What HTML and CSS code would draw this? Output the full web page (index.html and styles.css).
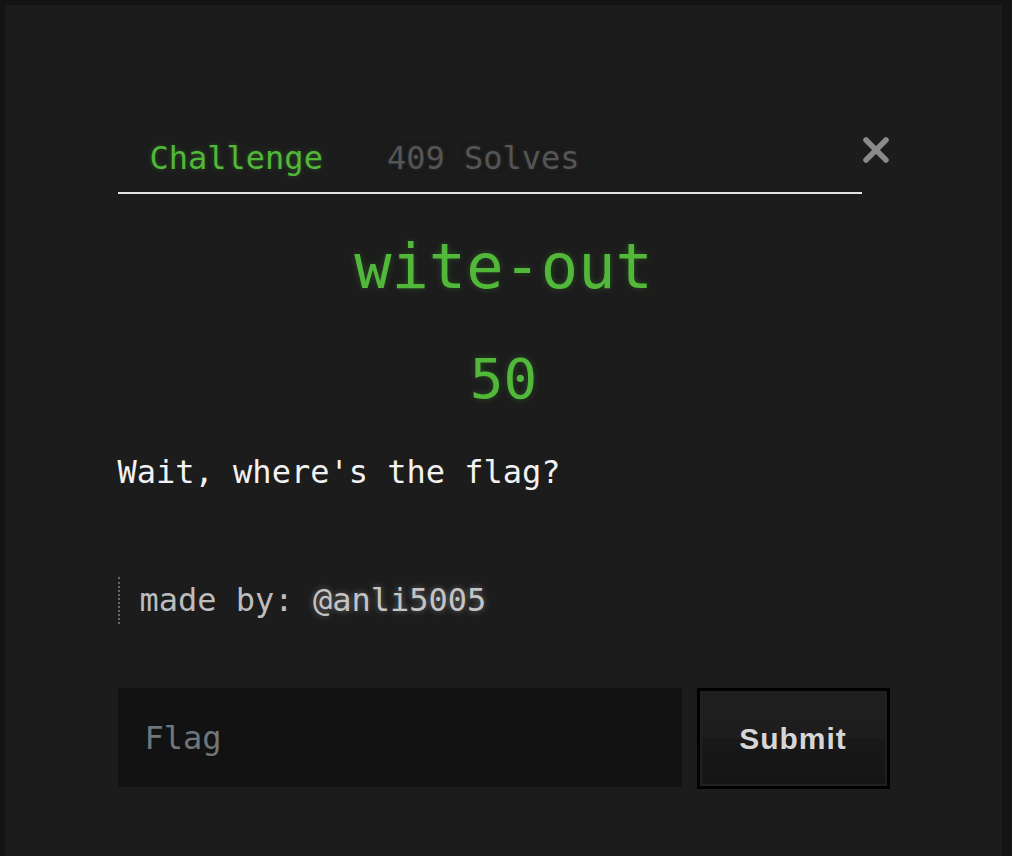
FILE: index.html
```html
<!DOCTYPE html>
<html lang="en">
<head>
    <meta charset="UTF-8">
    <meta name="viewport" content="width=device-width, initial-scale=1.0">
    <title>wite-out</title>
    <link rel="stylesheet" href="styles.css">
</head>
<body>
    <div class="modal">
        <div class="modal-body">
            <div class="tab-head">
                <nav class="tabs">
                    <a class="tab active" href="#">Challenge</a>
                    <a class="tab" href="#">409 Solves</a>
                </nav>
                <button class="close" type="button" aria-label="Close">
                    <svg width="28" height="28" viewBox="0 0 28 28">
                        <path d="M4 4 L24 24 M24 4 L4 24" stroke="#8a8a8a" stroke-width="5.5" stroke-linecap="round"/>
                    </svg>
                </button>
            </div>

            <h2 class="chal-name">wite-out</h2>
            <h3 class="chal-value">50</h3>

            <p class="chal-desc">Wait, where's the flag?</p>

            <blockquote class="author">made by: <span class="handle">@anli5005</span></blockquote>

            <form class="flag-form">
                <input type="text" class="flag-input" placeholder="Flag">
                <button type="submit" class="submit-btn">Submit</button>
            </form>
        </div>
    </div>
</body>
</html>
```

FILE: styles.css
```css
* {
    margin: 0;
    padding: 0;
    box-sizing: border-box;
}

body {
    background: #141414;
    min-height: 100vh;
    font-family: 'DejaVu Sans Mono', 'Liberation Mono', monospace;
    color: #eeeeee;
}

.modal {
    background: #1c1c1c;
    margin: 5px 10px 0 5px;
    min-height: 851px;
}

.modal-body {
    width: 772px;
    margin: 0 auto;
    padding-top: 126px;
}

/* tabs */
.tab-head {
    display: flex;
    align-items: flex-start;
}

.tabs {
    flex: 1;
    display: flex;
    border-bottom: 2px solid #e4e4e4;
}

.tab {
    font-size: 32px;
    line-height: 1.2;
    padding: 8px 32px 15px;
    text-decoration: none;
    color: #555555;
    text-shadow: 0 0 6px rgba(0, 0, 0, 0.9), 0 0 4px rgba(130, 130, 130, 0.45);
}

.tab.active {
    color: #52b83a;
    text-shadow: 0 0 5px rgba(82, 184, 58, 0.35);
}

.close {
    background: none;
    border: none;
    width: 28px;
    height: 28px;
    margin-top: 5px;
    cursor: pointer;
}

.close svg {
    display: block;
}

/* title */
.chal-name {
    font-size: 62px;
    font-weight: normal;
    line-height: 1.2;
    text-align: center;
    color: #52b83a;
    margin-top: 36px;
    text-shadow: 0 0 6px rgba(82, 184, 58, 0.3);
}

.chal-value {
    font-size: 56px;
    font-weight: normal;
    line-height: 1.2;
    text-align: center;
    color: #52b83a;
    margin-top: 40px;
    text-shadow: 0 0 6px rgba(82, 184, 58, 0.3);
}

.chal-desc {
    font-size: 32px;
    line-height: 1.2;
    color: #f2f2f2;
    margin-top: 41px;
}

.author {
    font-size: 32px;
    line-height: 47px;
    color: #bdbdbd;
    border-left: 2px dotted #666666;
    padding-left: 20px;
    margin-top: 86px;
}

.handle {
    color: #c4c4c4;
    text-shadow: 0 0 6px rgba(200, 200, 200, 0.45);
}

/* flag form */
.flag-form {
    display: flex;
    gap: 15px;
    margin-top: 64px;
}

.flag-input {
    width: 564px;
    height: 99px;
    background: #121212;
    border: none;
    outline: none;
    padding: 0 27px;
    font-family: 'DejaVu Sans Mono', 'Liberation Mono', monospace;
    font-size: 32px;
    color: #eeeeee;
}

.flag-input::placeholder {
    color: #6f777d;
}

.submit-btn {
    width: 193px;
    height: 101px;
    border: 3px solid #000000;
    background: linear-gradient(180deg, #1f1f1f 0%, #1d1d1d 48%, #181818 52%, #151515 100%);
    box-shadow: inset 0 0 0 2px #202020;
    font-family: 'Liberation Sans', Arial, sans-serif;
    font-weight: bold;
    font-size: 30px;
    letter-spacing: 1px;
    color: #d6d6d6;
    cursor: pointer;
}
```
